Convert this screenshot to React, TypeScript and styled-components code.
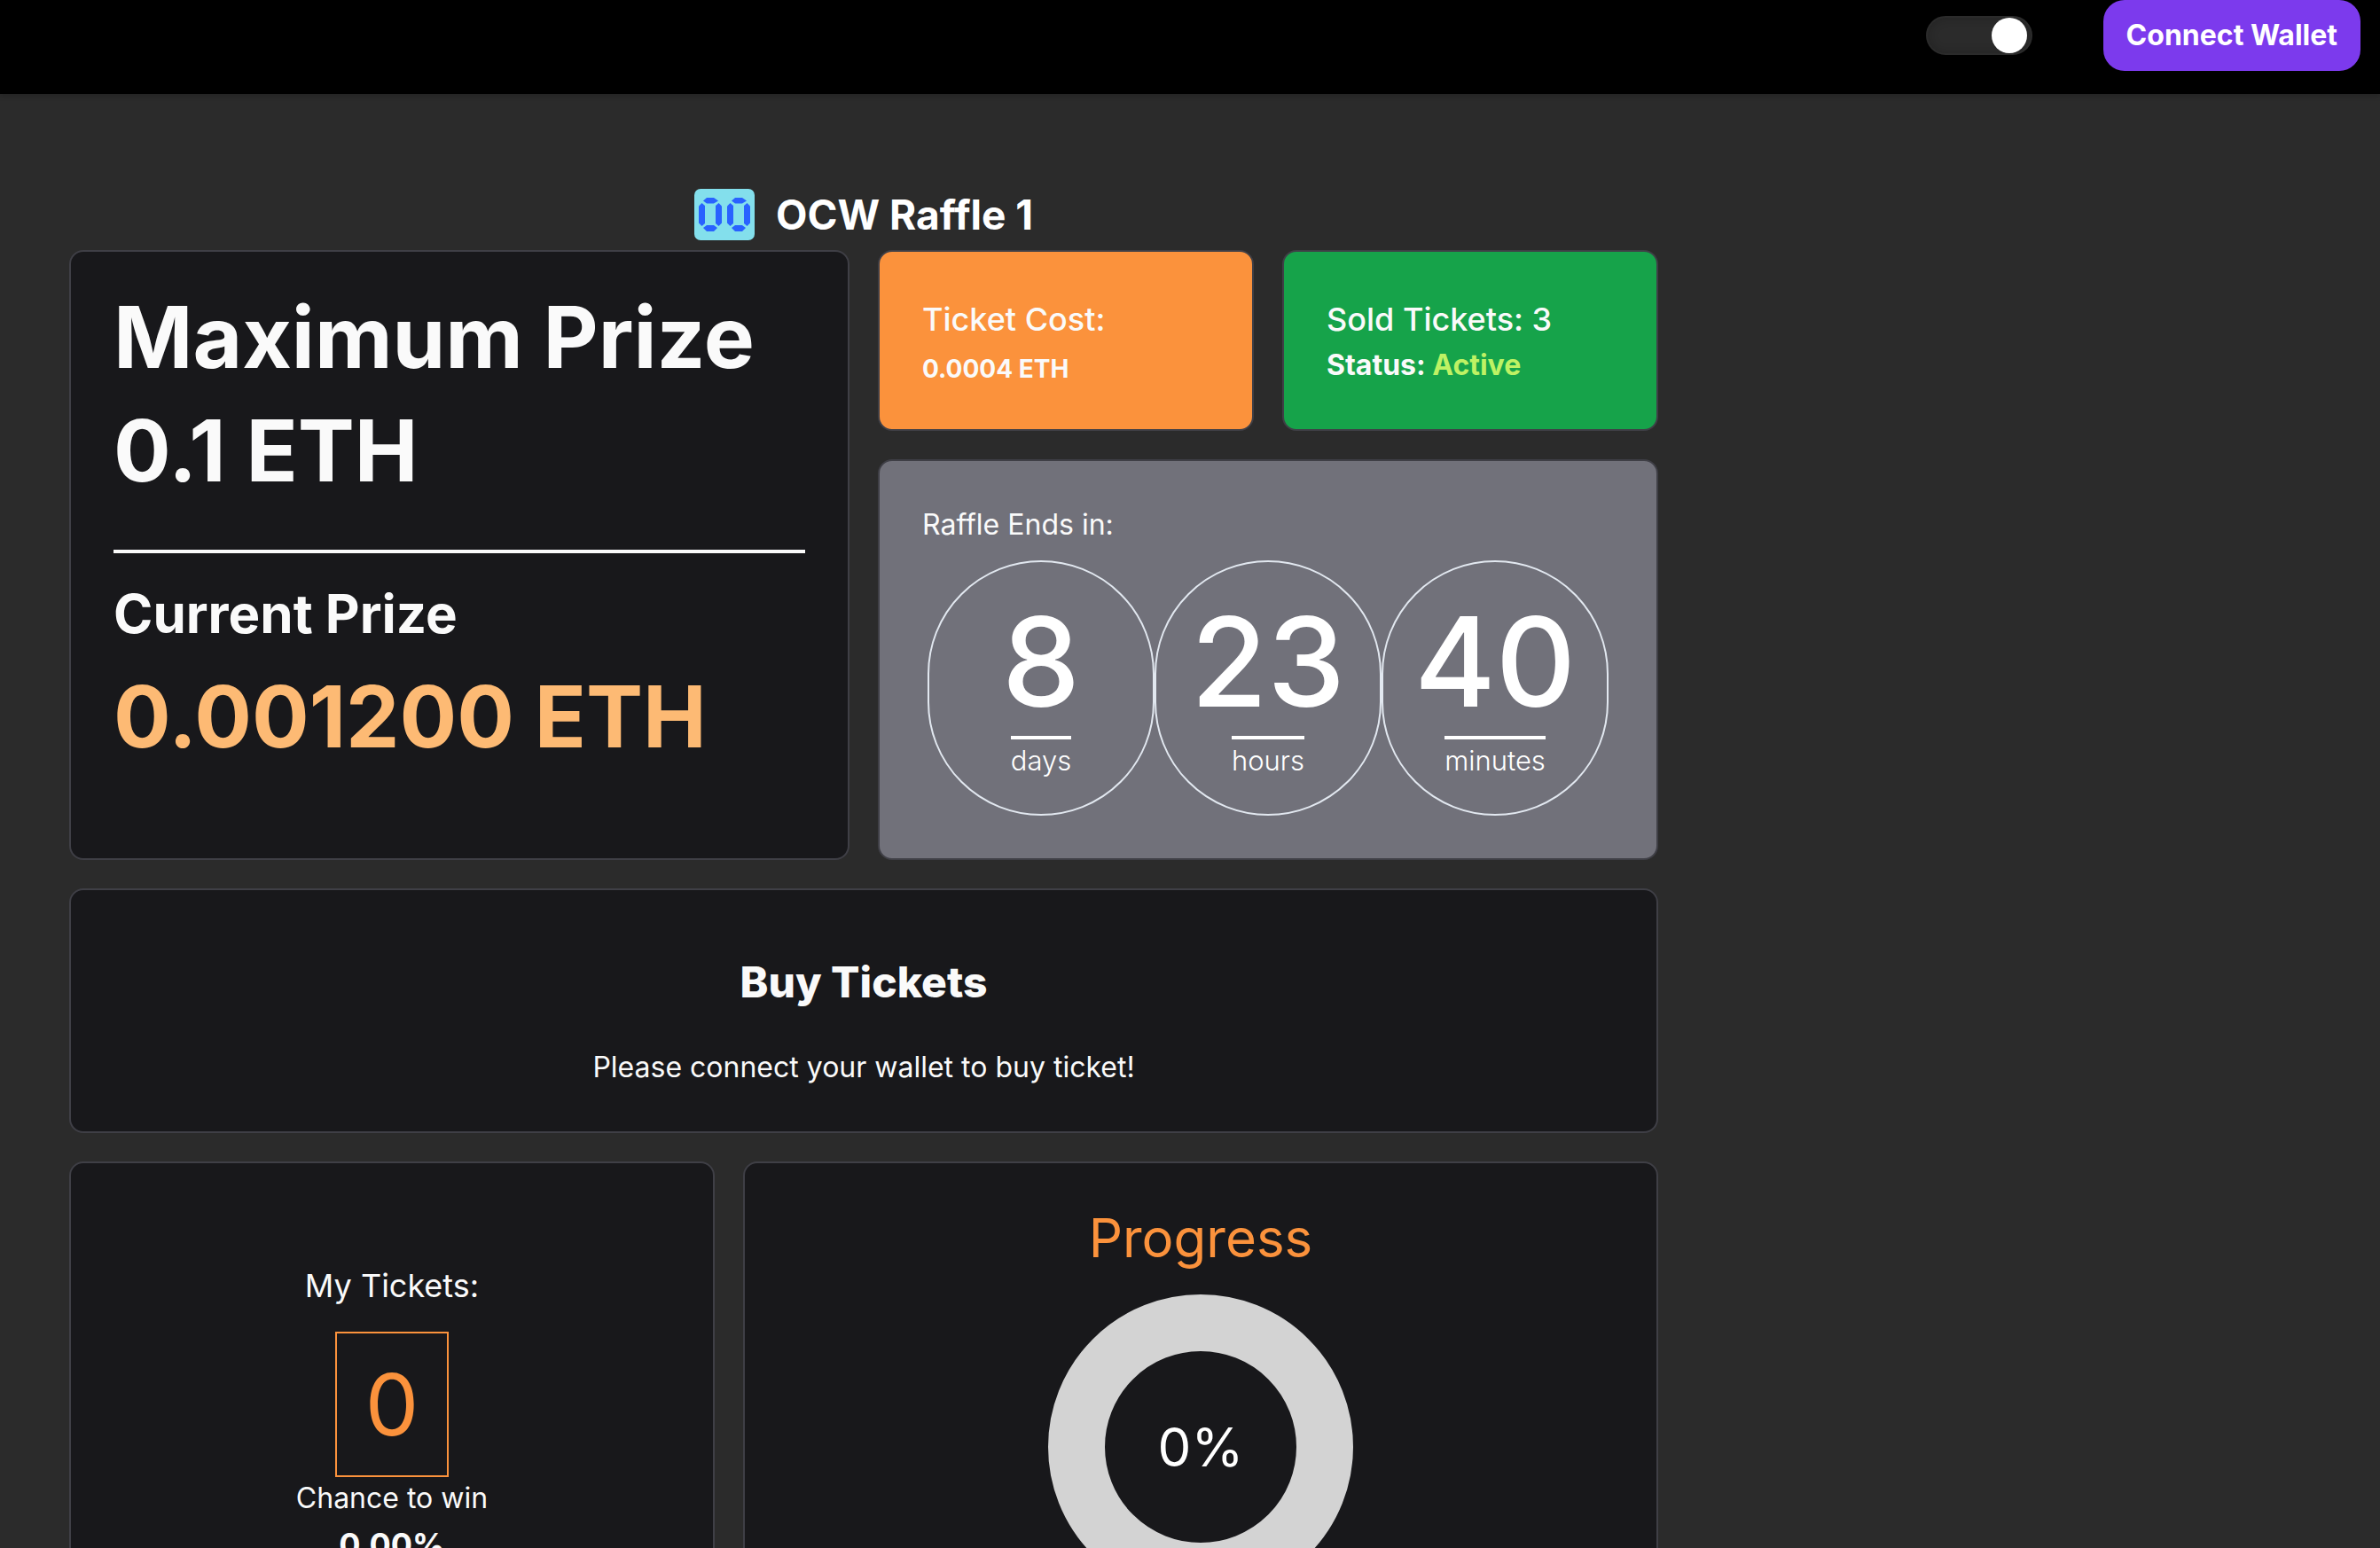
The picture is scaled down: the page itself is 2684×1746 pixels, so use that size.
import React, { useState } from "react";
import styled, { createGlobalStyle } from "styled-components";

const GlobalStyle = createGlobalStyle`
  *, *::before, *::after { box-sizing: border-box; }
  body {
    margin: 0;
    background: #2b2b2b;
    color: #fafafa;
    font-family: Inter, "Liberation Sans", sans-serif;
    font-size: 32px;
    line-height: 48px;
  }
  h1, h2, h3, p, hr { margin: 0; }
`;

const Header = styled.header`
  display: flex;
  justify-content: flex-end;
  align-items: flex-start;
  gap: 80px;
  height: 106px;
  padding-right: 22px;
  background: #000;
  box-shadow: 0 2px 6px rgba(0, 0, 0, 0.2);
`;

const Switch = styled.input`
  appearance: none;
  display: flex;
  align-items: center;
  justify-content: flex-start;
  width: 120px;
  height: 44px;
  margin: 18px 0 0;
  padding: 0 4px;
  border: 2px solid #2b2b2b;
  border-radius: 22px;
  background: #2b2b2b;
  box-shadow: inset 0 0 12px rgba(0, 0, 0, 0.2);
  cursor: pointer;

  &::before {
    content: "";
    width: 40px;
    height: 40px;
    border-radius: 50%;
    background: #fff;
  }

  &:checked {
    justify-content: flex-end;
  }
`;

const WalletButton = styled.button`
  height: 80px;
  padding: 0 26px;
  border: 0;
  border-radius: 24px;
  background: #7c3aed;
  color: #fff;
  font: inherit;
  font-weight: 700;
  cursor: pointer;
`;

const Main = styled.main`
  max-width: 1870px;
  padding: 104px 0 64px 78px;
`;

const TitleBar = styled.div`
  display: flex;
  justify-content: center;
  align-items: center;
  gap: 24px;
  height: 64px;
  margin-bottom: 8px;
`;

const Title = styled.h1`
  font-size: 46px;
  line-height: 64px;
  font-weight: 700;
  color: #fff;
`;

const Grid = styled.div`
  display: grid;
  grid-template-columns: repeat(12, minmax(0, 1fr));
  gap: 32px;
`;

const Card = styled.section<{ $span: number; $bg?: string; $center?: boolean }>`
  grid-column: span ${(p) => p.$span};
  display: flex;
  flex-direction: column;
  align-items: ${(p) => (p.$center ? "center" : "stretch")};
  padding: 48px;
  border: 2px solid #3f3f46;
  border-radius: 16px;
  background: ${(p) => p.$bg ?? "#18181b"};
`;

const TicketsCard = styled(Card)`
  justify-content: center;
`;

const SideColumn = styled.div`
  grid-column: span 6;
  display: grid;
  grid-template-columns: repeat(2, minmax(0, 1fr));
  gap: 32px;
`;

const WideCard = styled(Card)`
  grid-column: 1 / -1;
`;

const PrizeCard = styled(Card)`
  gap: 32px;
`;

const PrizeText = styled.p<{ $color?: string }>`
  font-size: 96px;
  line-height: 96px;
  font-weight: 700;
  color: ${(p) => p.$color ?? "inherit"};
`;

const Rule = styled.hr`
  width: 100%;
  height: 4px;
  margin-top: 32px;
  border: 0;
  background: #fafafa;
`;

const PrizeLabel = styled.h2`
  font-size: 60px;
  line-height: 72px;
  font-weight: 700;
`;

const StatLabel = styled.p<{ $weight?: number }>`
  font-size: 36px;
  line-height: 56px;
  font-weight: ${(p) => p.$weight ?? 400};
`;

const Cost = styled.p`
  margin-top: 8px;
  font-size: 28px;
  line-height: 40px;
  font-weight: 700;
`;

const Status = styled.p`
  font-weight: 700;
`;

const Active = styled.span`
  color: #bef264;
`;

const Countdown = styled.div`
  display: flex;
  justify-content: center;
  margin-top: 16px;
`;

const Unit = styled.div`
  display: flex;
  flex-direction: column;
  align-items: center;
  width: 256px;
  height: 288px;
  padding-top: 40px;
  border: 2px solid #e2e8f0;
  border-radius: 144px;
  color: #fff;
`;

const UnitValue = styled.span`
  font-size: 140px;
  line-height: 144px;
  font-weight: 500;
`;

const UnitName = styled.span`
  margin-top: 12px;
  border-top: 4px solid #fff;
  font-size: 31px;
  font-weight: 300;
`;

const BuyTitle = styled.h2`
  margin: 32px 0 48px;
  font-size: 48px;
  line-height: 48px;
  font-weight: 800;
`;

const TicketCount = styled.div`
  margin-top: 24px;
  padding: 32px;
  border: 2px solid #fb923c;
  font-size: 96px;
  line-height: 96px;
  color: #fb923c;
`;

const Chance = styled.p`
  font-size: 36px;
  line-height: 56px;
  font-weight: 700;
`;

const ProgressTitle = styled.h2`
  font-size: 60px;
  line-height: 72px;
  font-weight: 400;
  color: #fb923c;
`;

const Donut = styled.div`
  display: grid;
  place-items: center;

  > * {
    grid-area: 1 / 1;
  }
`;

const Percent = styled.span`
  font-size: 60px;
  line-height: 72px;
  color: #fff;
`;

const SEGMENTS = [
  "M9 0h8l5 3.5l-5 3h-8l-4 -3z",
  "M9 31h8l4 3l-4 4h-8l-4 -4z",
  "M3.5 6l3.5 3v20l-3.5 3l-3.5 -3.5v-19z",
  "M22.5 6l3.5 3.5v19l-3.5 3.5l-3.5 -3v-20z",
];

const RaffleLogo = () => (
  <svg width="68" height="58" viewBox="0 0 68 58" aria-hidden="true">
    <rect width="68" height="58" rx="7" fill="#83dfec" />
    {[5, 37].map((x) => (
      <g key={x} transform={`translate(${x} 10)`} fill="#2962ff">
        {SEGMENTS.map((d) => (
          <path key={d} d={d} />
        ))}
      </g>
    ))}
  </svg>
);

const countdown = [
  { value: 8, name: "days" },
  { value: 23, name: "hours" },
  { value: 40, name: "minutes" },
];

export default function App() {
  const [dark, setDark] = useState(true);

  return (
    <>
      <GlobalStyle />
      <Header>
        <Switch
          type="checkbox"
          role="switch"
          aria-label="Dark mode"
          checked={dark}
          onChange={(e) => setDark(e.target.checked)}
        />
        <WalletButton type="button">Connect Wallet</WalletButton>
      </Header>
      <Main>
        <TitleBar>
          <RaffleLogo />
          <Title>OCW Raffle 1</Title>
        </TitleBar>
        <Grid>
          <PrizeCard $span={6}>
            <PrizeText>Maximum Prize</PrizeText>
            <PrizeText>0.1 ETH</PrizeText>
            <Rule />
            <PrizeLabel>Current Prize</PrizeLabel>
            <PrizeText $color="#fdba74">0.001200 ETH</PrizeText>
          </PrizeCard>
          <SideColumn>
            <Card $span={1} $bg="#fb923c">
              <StatLabel $weight={500}>Ticket Cost:</StatLabel>
              <Cost>0.0004 ETH</Cost>
            </Card>
            <Card $span={1} $bg="#16a34a">
              <StatLabel $weight={500}>Sold Tickets: 3</StatLabel>
              <Status>
                Status: <Active>Active</Active>
              </Status>
            </Card>
            <Card $span={2} $bg="#71717a">
              <p>Raffle Ends in:</p>
              <Countdown>
                {countdown.map((unit) => (
                  <Unit key={unit.name}>
                    <UnitValue>{unit.value}</UnitValue>
                    <UnitName>{unit.name}</UnitName>
                  </Unit>
                ))}
              </Countdown>
            </Card>
          </SideColumn>
          <WideCard $span={12} $center>
            <BuyTitle>Buy Tickets</BuyTitle>
            <p>Please connect your wallet to buy ticket!</p>
          </WideCard>
          <TicketsCard $span={5} $center>
            <StatLabel>My Tickets:</StatLabel>
            <TicketCount>0</TicketCount>
            <p>Chance to win</p>
            <Chance>0.00%</Chance>
          </TicketsCard>
          <Card $span={7} $center>
            <ProgressTitle>Progress</ProgressTitle>
            <Donut>
              <svg width="400" height="400" viewBox="0 0 400 400" aria-hidden="true">
                <circle cx="200" cy="200" r="140" fill="none" stroke="#d3d3d3" strokeWidth="64" />
              </svg>
              <Percent>0%</Percent>
            </Donut>
          </Card>
        </Grid>
      </Main>
    </>
  );
}
